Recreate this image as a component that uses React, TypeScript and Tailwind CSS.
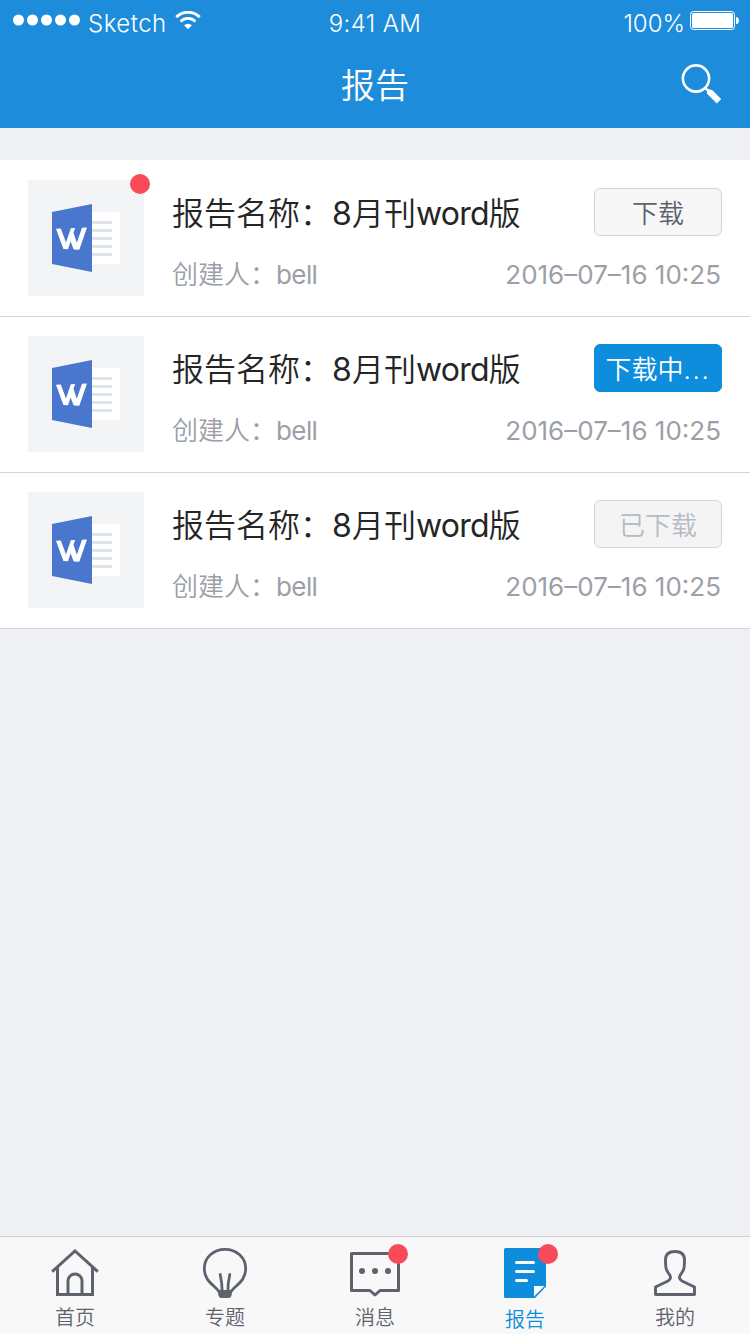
import type { ReactNode } from 'react';

const latin = "font-['Inter','Noto_Sans_CJK_SC',sans-serif]";

function SignalDots() {
  return (
    <svg width="68" height="12" viewBox="0 0 68 12" fill="#fff">
      {[5.5, 19.5, 33.5, 47.5, 61.5].map((cx) => (
        <circle key={cx} cx={cx} cy="6" r="5.5" />
      ))}
    </svg>
  );
}

function WifiIcon() {
  return (
    <svg width="26" height="19" viewBox="0 0 26 19" fill="none" stroke="#fff">
      <path d="M1.3 6.1a16.6 16.6 0 0 1 23.4 0" strokeWidth="3" />
      <path d="M5.6 10.5a10.5 10.5 0 0 1 14.8 0" strokeWidth="2.8" />
      <path d="M13 18.2l-3.9-3.9a5.5 5.5 0 0 1 7.8 0z" fill="#fff" stroke="none" />
    </svg>
  );
}

function BatteryIcon() {
  return (
    <svg width="49" height="19" viewBox="0 0 49 19">
      <rect x="0.5" y="0.5" width="44" height="18" rx="3" fill="none" stroke="#fff" />
      <rect x="2" y="2" width="41" height="15" rx="1.5" fill="#fff" />
      <path d="M46 6h1q2 1 2 3.500t-2 3.500h-1z" fill="#fff" />
    </svg>
  );
}

function SearchIcon() {
  return (
    <svg width="42" height="42" viewBox="0 0 42 42">
      <circle cx="16" cy="15.5" r="13.1" fill="none" stroke="#fff" strokeWidth="2.6" />
      <path d="M25 24.5l3.400 4" stroke="#fff" strokeWidth="2" />
      <path d="M26.800 25.400l5.700 1.800 8.700 8.700-4.400 4.500-9.700-9.700z" fill="#fff" />
    </svg>
  );
}

function WordIcon() {
  return (
    <svg width="68" height="68" viewBox="0 0 68 68">
      <rect x="40" y="8" width="28" height="52" fill="#fff" />
      {[17, 25, 33, 41, 49].map((y) => (
        <rect key={y} x="40" y={y} width="20" height="3" fill="#dfe3eb" />
      ))}
      <path d="M0 8L40 0v68L0 60z" fill="#4877cd" />
      <path
        d="M4 24.800l4.800-.2 5.200 14L18.800 24.300l4.400-.2-1.700 4.600 3.300 10L30 23.700l5-.3-7.700 22.400-5.600-.2-3.100-8.100-2.600 7.700-4.600-.2z"
        fill="#fff"
      />
    </svg>
  );
}

function HomeIcon() {
  return (
    <svg width="50" height="52" viewBox="0 0 50 52" fill="none" stroke="#5d626d" strokeWidth="3">
      <path d="M2.2 25.600L25 5l22.800 20.600" />
      <path d="M7.500 21.500V48.500h35V21.500" />
      <path d="M18 48.500V35a7 7 0 0 1 14 0v13.500" />
    </svg>
  );
}

function BulbIcon() {
  return (
    <svg width="50" height="52" viewBox="0 0 50 52" fill="none" stroke="#5d626d" strokeWidth="2.800">
      <path d="M19 45.500C15 39.500 4.300 35.500 4.300 22.800 4.300 11.500 13.500 3.300 25 3.300s20.700 8.200 20.700 19.500C45.700 35.500 35 39.500 31 45.500" />
      <path d="M20.200 28.500Q22 36 22.200 46M29.800 28.500Q28 36 27.800 46" strokeLinecap="round" />
      <path d="M17.500 44h15l-1 5.500q-.5 2.500-3 2.500h-7q-2.500 0-3-2.500z" fill="#5d626d" stroke="none" />
    </svg>
  );
}

function MessageIcon() {
  return (
    <svg className="shrink-0" width="52" height="52" viewBox="0 0 52 52">
      <path
        d="M2.500 7.500h47v37H31l-5 4.500-5-4.500H2.500z"
        fill="none"
        stroke="#5d626d"
        strokeWidth="3"
        strokeLinejoin="round"
      />
      {[13, 26, 39].map((cx) => (
        <circle key={cx} cx={cx} cy="25" r="3" fill="#5d626d" />
      ))}
    </svg>
  );
}

function ReportIcon() {
  return (
    <svg width="42" height="52" viewBox="0 0 42 52">
      <path d="M1.500 2H42v38.500L31 52H1.500Q0 52 0 50.500V3.500Q0 2 1.500 2z" fill="#0d8ddb" />
      <path d="M30 40h10.500L30 50.500z" fill="#fff" />
      <path d="M12.500 16.500h17M12.500 25.500h17M12.500 34.500h10" stroke="#fff" strokeWidth="3" strokeLinecap="round" />
    </svg>
  );
}

function ProfileIcon() {
  return (
    <svg width="42" height="52" viewBox="0 0 42 52" fill="none" stroke="#5d626d" strokeWidth="2.900">
      <path
        d="M21 5.500c-6 0-9.500 3-9.500 8.500 0 8 .5 10 3.500 14 2.500 3 1.800 5.500-1 7L1.500 41v7.500h39V41L28 35c-2.800-1.500-3.500-4-1-7 3-4 3.500-6 3.500-14 0-5.500-3.500-8.500-9.500-8.500z"
        strokeLinejoin="round"
      />
    </svg>
  );
}

type Status = 'idle' | 'loading' | 'done';

const buttons: Record<Status, { label: ReactNode; className: string }> = {
  idle: { label: '下载', className: 'border-[#d2d4da] bg-[#f7f7f8] text-[#5d626d]' },
  loading: {
    label: <>下载中<span className="tracking-[1.6px]">...</span></>,
    className: 'border-[#0d8ddb] bg-[#0d8ddb] text-white',
  },
  done: { label: '已下载', className: 'border-[#d2d4da] bg-[#f4f4f5] text-[#b5bbc3]' },
};

function Report({ status, unread }: { status: Status; unread?: boolean }) {
  const button = buttons[status];
  return (
    <li className="flex h-[156px] border-b border-[#d2d4da] pr-7 pl-7 pt-[19px]">
      <div className="relative flex size-[116px] shrink-0 items-center justify-center bg-[#f3f4f6]">
        <WordIcon />
        {unread && <span className="absolute -top-1.5 -right-1.5 size-5 rounded-full bg-[#f74b59]" />}
      </div>
      <div className="ml-7 flex-1 pt-2">
        <div className="flex h-12 items-center justify-between">
          <h2 className="pt-[3px] text-[32px] leading-[48px] font-[350] whitespace-nowrap text-[#252525]">
            报告名称：<span className="inline-block w-5 font-normal">8</span>月刊<span className="font-normal tracking-[-0.8px]">word</span>版
          </h2>
          <button className={`h-12 w-32 rounded-md border pt-[3px] text-[26px] leading-[43px] font-[350] whitespace-nowrap ${button.className}`}>
            {button.label}
          </button>
        </div>
        <div className="mt-[19px] flex justify-between pr-px text-[26px] leading-10 font-[350] text-[#9c9fa7]">
          <span>创建人：<span className="font-normal tracking-[-0.6px]">bell</span></span>
          <time className="font-normal">2016–07–16 10:25</time>
        </div>
      </div>
    </li>
  );
}

function Tab({ label, icon, active, badge }: { label: string; icon: ReactNode; active?: boolean; badge?: boolean }) {
  return (
    <a className={`flex flex-1 flex-col items-center pt-[9px] ${active ? 'text-[#0d8ddb]' : 'text-[#5d626d]'}`}>
      <span className="relative flex h-[52px] w-[50px] justify-center">
        {icon}
        {badge && <span className="absolute -top-0.5 -right-2 size-5 rounded-full bg-[#f74b59]" />}
      </span>
      <span className={`text-[20px] leading-[30px] font-[350] ${active ? 'mt-[7px]' : 'mt-[5px]'}`}>{label}</span>
    </a>
  );
}

export default function App() {
  return (
    <div className={`flex h-[1334px] w-[750px] flex-col overflow-hidden bg-[#eff0f3] ${latin}`}>
      <header className="h-32 bg-[#1d8cdb] text-white">
        <div className="grid h-10 grid-cols-3 pt-[3px] text-[24px] leading-10 font-light">
          <div className="flex pl-[13px]">
            <span className="pt-[11px]"><SignalDots /></span>
            <span className="ml-[7px] w-[78px] pt-px tracking-[0.5px]">Sketch</span>
            <span className="ml-[9px] pt-2"><WifiIcon /></span>
          </div>
          <div className="pt-px text-center tracking-[0.4px]">9:41 AM</div>
          <div className="flex justify-end pr-[11px]">
            <span className="pt-px">100%</span>
            <span className="ml-[5px] pt-2"><BatteryIcon /></span>
          </div>
        </div>
        <div className="grid h-[88px] grid-cols-3 items-center">
          <h1 className="col-start-2 pt-0.5 text-center text-[34px] font-[350]">报告</h1>
          <div className="flex justify-end pr-7">
            <SearchIcon />
          </div>
        </div>
      </header>
      <ul className="mt-8 bg-white pt-px">
        <Report status="idle" unread />
        <Report status="loading" />
        <Report status="done" />
      </ul>
      <nav className="mt-auto flex h-[98px] border-t border-[#c9d0d8] bg-[#f8f8f8]">
        <Tab label="首页" icon={<HomeIcon />} />
        <Tab label="专题" icon={<BulbIcon />} />
        <Tab label="消息" icon={<MessageIcon />} badge />
        <Tab label="报告" icon={<ReportIcon />} active badge />
        <Tab label="我的" icon={<ProfileIcon />} />
      </nav>
    </div>
  );
}
